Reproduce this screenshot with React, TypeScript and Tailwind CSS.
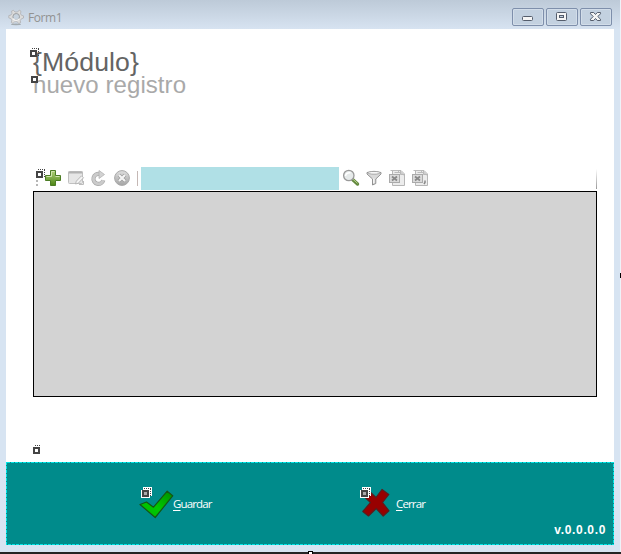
import type { ReactNode } from "react";

function Smart({ className, halo = false, dots = true }: { className: string; halo?: boolean; dots?: boolean }) {
  return (
    <svg className={`absolute ${className}`} width="11" height="11" viewBox="0 0 11 11" shapeRendering="crispEdges">
      {halo && <path d="M0 3V11H9V9H11V0H2V3Z" fill="#fff" />}
      {dots && <path d="M3 1.5H10M9.5 2V9" stroke="#444" strokeDasharray="1 1" fill="none" />}
      <path d="M1 3H8V10H1Z" fill="#444" />
      <path d="M3 5H6V8H3Z" fill={halo ? "#aaa" : "#fff"} />
    </svg>
  );
}

function Icon({ children, className = "" }: { children: ReactNode; className?: string }) {
  return (
    <svg width="18" height="18" viewBox="0 0 18 18" className={`shrink-0 ${className}`}>
      <defs>
        <linearGradient id="gray" x2="0" y2="1">
          <stop stopColor="#dedede" />
          <stop offset="1" stopColor="#a5a5a5" />
        </linearGradient>
        <linearGradient id="plus" x2="0" y2="1">
          <stop stopColor="#b2d37b" />
          <stop offset="1" stopColor="#4c8514" />
        </linearGradient>
      </defs>
      {children}
    </svg>
  );
}

function CaptionButton({ children }: { children: ReactNode }) {
  return (
    <div className="flex h-[18px] w-8 items-center justify-center rounded-[2px] border border-[#7e8fab] bg-[#c3d1e0] shadow-[inset_0_0_0_1px_#d2dde9]">
      <svg width="14" height="12" viewBox="0 0 14 12">{children}</svg>
    </div>
  );
}

function TitleBar() {
  return (
    <header className="flex h-[29px] items-start bg-linear-to-b from-[#bdcad8] to-[#d7e3f1] pl-2">
      <svg width="17" height="17" viewBox="0 0 17 17" className="mt-[9px]">
        <ellipse cx="8" cy="15.3" rx="5" ry=".9" fill="#a2aaaf" />
        <path d="M5.4 1.3 7 3H9.6L11.3 1.1 13 2.3 12.5 4.8 13.5 6.3 15.5 6.9V9L13.4 9.8 12.3 11.5 12.6 13.8 10.6 14.5 9.3 12.8H6.7L5 14.4 3.3 13.5 3.7 11.2 2.8 9.6.8 8.9V6.6L3 6 4 4.4 3.5 2.2Z" fill="#dcdcdc" stroke="#aaabac" strokeWidth=".7" />
        <circle cx="8.2" cy="7.8" r="3.3" fill="#c7d3df" stroke="#9c9ea0" strokeWidth="1" />
        <path d="M4.8 9.5Q7.8 13.2 11.5 9.6" stroke="#f7f7f7" strokeWidth="1.2" fill="none" />
      </svg>
      <span className="ml-[3px] mt-[9px] font-['Open_Sans',sans-serif] text-[12px] leading-[17px] tracking-[-0.45px] text-[#929292]">Form1</span>
      <div className="ml-auto mr-[9px] mt-2 flex gap-[2px]">
        <CaptionButton>
          <rect x="1.5" y="5.5" width="10" height="4" rx="1" fill="#f5f5f5" stroke="#545d6c" />
        </CaptionButton>
        <CaptionButton>
          <rect x="1.5" y="1.5" width="10" height="8" rx="1" fill="#f5f5f5" stroke="#545d6c" />
          <rect x="4.5" y="4.5" width="4" height="2" fill="#c3d1e0" stroke="#545d6c" />
        </CaptionButton>
        <CaptionButton>
          <path d="M1.5 1.5H4.7L6.5 3.5 8.3 1.5H11.5V2.8L8.8 5.5 11.5 8.2V9.5H8.3L6.5 7.5 4.7 9.5H1.5V8.2L4.2 5.5 1.5 2.8Z" fill="#f5f5f5" stroke="#545d6c" />
        </CaptionButton>
      </div>
    </header>
  );
}

function Sheet({ comma = false }: { comma?: boolean }) {
  return (
    <>
      <path d="M4.5 1.5H13L16.5 5V16.5H4.5Z" fill="#ececec" stroke="#b6b6b6" />
      <path d="M2.5 1.5H10.5V3.5M6.5 3.5H13L16 6.5" fill="none" stroke="#bbb" />
      <path d="M12.5 2V5.5H16" fill="#ccc" stroke="#b9b9b9" />
      <rect x="1.5" y="5.5" width="10" height="8" fill="#dadada" stroke="#aaa" />
      <path d="M4 7.5 9 11.5M9 7.5 4 11.5" stroke="#888" strokeWidth="1.7" />
      {comma && <path d="M14 11.5V13.5L13 15" stroke="#888" strokeWidth="1.5" fill="none" />}
    </>
  );
}

function Toolbar() {
  return (
    <div className="relative flex h-6 items-start">
      <svg width="2" height="18" className="ml-[3px] mt-1" shapeRendering="crispEdges">
        <path d="M1 9V17" stroke="#b6b6b6" strokeWidth="2" strokeDasharray="2 2" />
      </svg>
      <Icon className="ml-[6px] mt-[2px]">
        <path d="M6.5 1.5H11.5V6.5H16.5V11.5H11.5V16.5H6.5V11.5H1.5V6.5H6.5Z" fill="url(#plus)" stroke="#4c7d25" />
        <path d="M7.5 7.5V2.5H10.5M2.5 7.5H7.5M11.5 7.5H15.5" stroke="#d0e4ae" fill="none" />
      </Icon>
      <Icon className="ml-[5px] mt-[2px]">
        <rect x="1.5" y="2.5" width="14" height="12" rx="1" fill="#e6e6e6" stroke="#c0c0c0" />
        <path d="M1.5 3.5H15.5" stroke="#b2b2b2" strokeWidth="2" />
        <path d="M9.3 12.2 14.5 6.8 16.5 8.8 11.3 14.2 8.5 15Z" fill="#f4f4f4" stroke="#b0b0b0" strokeWidth=".9" />
        <path d="M12 15.5H16.5V12" fill="none" stroke="#bcbcbc" />
      </Icon>
      <Icon className="ml-[5px] mt-[2px]">
        <path d="M13.3 11.2A5 5 0 1 1 9.7 5" fill="none" stroke="#a9a9a9" strokeWidth="4.2" />
        <path d="M13.3 11.2A5 5 0 1 1 9.7 5" fill="none" stroke="#cbcbcb" strokeWidth="2.8" />
        <path d="M9 1.5 14.5 5.5 9 9.5Z" fill="#d2d2d2" stroke="#b3b3b3" strokeWidth=".8" />
      </Icon>
      <Icon className="ml-[5px] mt-[2px]">
        <circle cx="9" cy="9" r="7.4" fill="url(#gray)" stroke="#aaa" />
        <path d="M6 6 12 12M12 6 6 12" stroke="#999" strokeWidth="3.6" />
        <path d="M6 6 12 12M12 6 6 12" stroke="#f4f4f4" strokeWidth="2.3" />
      </Icon>
      <div className="ml-[6px] mt-[4px] h-[15px] w-px bg-[#c5b8b5]" />
      <div className="ml-[3px] h-[23px] w-[198px] bg-[#b0e0e6]" />
      <Icon className="ml-[3px] mt-[2px]">
        <path d="M10 10 15.5 15" stroke="#63883e" strokeWidth="3.4" strokeLinecap="round" />
        <path d="M11 10.3 15.5 14.3" stroke="#b4cf86" strokeWidth="1" />
        <circle cx="6.8" cy="6.5" r="5.2" fill="#e6eaea" stroke="#999" strokeWidth="1.3" />
        <path d="M3.5 7Q4 3.4 8.5 3.7" stroke="#fff" strokeWidth="1.5" fill="none" />
      </Icon>
      <Icon className="ml-[5px] mt-[2px]">
        <path d="M2 3.5Q9 1.3 16 3.5V5L10.8 10V14.5L7.5 16V10L2 5Z" fill="#d9d9d9" stroke="#888" strokeWidth=".9" />
        <ellipse cx="9" cy="3.8" rx="6" ry="1.4" fill="#f7f7f7" stroke="#999" strokeWidth=".8" />
        <path d="M8.8 9.5V14" stroke="#fff" />
      </Icon>
      <Icon className="ml-[5px] mt-[2px]"><Sheet /></Icon>
      <Icon className="ml-[5px] mt-[2px]"><Sheet comma /></Icon>
      <div className="ml-auto mt-[2px] h-5 w-px bg-linear-to-b from-white to-[#999]" />
      <Smart className="left-[2px] top-[1px]" />
    </div>
  );
}

export default function App() {
  return (
    <div className="relative flex h-[554px] w-[621px] flex-col overflow-hidden bg-[#d7e4f2] font-['Liberation_Sans',Arial,sans-serif]">
      <TitleBar />
      <main className="ml-[6px] h-[433px] w-[608px] bg-white pl-[27px] pr-[17px]">
        <div className="relative h-[138px]">
          <h1 className="pt-[21px] text-[26.67px] leading-[24px] tracking-[0.1px] text-[#646464]">{"{Módulo}"}</h1>
          <p className="text-[24px] leading-[22px] tracking-[0.07px] text-[#a9a9a9]">nuevo registro</p>
          <Smart className="-left-1 top-[18px]" />
          <Smart className="-left-[3px] top-[44px]" dots={false} />
        </div>
        <Toolbar />
        <div className="relative h-[206px] border border-black bg-[#d3d3d3]">
          <Smart className="-left-[2px] top-[252px]" dots={false} />
          <svg className="absolute left-0 top-[252px]" width="8" height="3" shapeRendering="crispEdges">
            <path d="M1 1.5H7" stroke="#444" strokeDasharray="1 1" />
          </svg>
        </div>
      </main>
      <footer className="relative ml-[6px] flex h-[83px] w-[608px] bg-[#008b8b] font-['Open_Sans',sans-serif] text-[11.5px] leading-4 text-white">
        <svg className="pointer-events-none absolute inset-0" width="608" height="83" shapeRendering="crispEdges">
          <rect x=".5" y=".5" width="607" height="82" fill="none" stroke="#00e5e5" strokeDasharray="3 1" />
        </svg>
        <div className="relative ml-[133px] mt-[26px] flex h-[34px] w-[100px]">
          <svg width="35" height="33" viewBox="0 0 35 33" className="shrink-0">
            <defs>
              <linearGradient id="tick" x1="1" x2="0" y2="1">
                <stop stopColor="#008c00" />
                <stop offset=".55" stopColor="#00c900" />
                <stop offset="1" stopColor="#00b600" />
              </linearGradient>
            </defs>
            <path d="M1 16.5 7.5 14 14.5 19.2 28.2 3.2 33.7 7.8 16.2 29.5Z" fill="url(#tick)" stroke="#145714" strokeWidth="1.2" strokeLinejoin="round" />
          </svg>
          <span className="-ml-px mt-2 tracking-[-0.85px]"><u className="underline-offset-2">G</u>uardar</span>
          <Smart className="left-[2px] -top-[1px]" halo />
        </div>
        <div className="relative ml-[121px] mt-[26px] flex h-[34px] w-[90px]">
          <svg width="34" height="33" viewBox="0 0 34 33" className="shrink-0">
            <path d="M8.5 2.5 16 9.5 22 1.5 28.8 6.5 22.5 14.5 29 22.8 23.2 28 16.2 20.5 8.5 28 2.8 23.5 10.5 14.5 3.5 8Z" fill="#980000" stroke="#5a1d1d" strokeWidth="1.2" strokeLinejoin="round" />
          </svg>
          <span className="ml-[2px] mt-2 tracking-[-0.85px]"><u className="underline-offset-2">C</u>errar</span>
          <Smart className="left-0 -top-[1px]" halo />
        </div>
        <span className="ml-auto mr-[8px] mt-[60px] font-['Liberation_Sans',Arial,sans-serif] text-[12px] font-bold tracking-[0.65px]">v.0.0.0.0</span>
      </footer>
      <div className="mt-auto h-[2px] bg-[#252525]" />
      <div className="absolute right-0 top-0 h-[552px] w-px bg-[#eef2f8]" />
      <div className="absolute right-0 top-[273px] h-[5px] w-px bg-black" />
      <div className="absolute bottom-0 left-[308px] h-[3px] w-[5px] border border-b-0 border-black bg-white" />
    </div>
  );
}
